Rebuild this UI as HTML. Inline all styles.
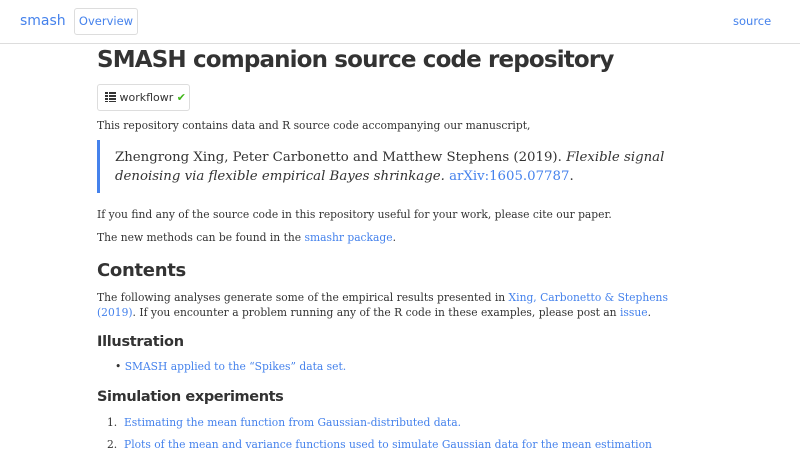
<!DOCTYPE html>
<html><head><meta charset="utf-8"><style>
*{margin:0;padding:0;box-sizing:border-box}
body{width:800px;height:450px;overflow:hidden;background:#fff;font-family:"DejaVu Serif","Liberation Serif",serif;color:#333;position:relative}
.a{position:absolute;white-space:nowrap}
a{color:#4582ec;text-decoration:none}
.nav{position:absolute;left:0;top:0;width:800px;height:44px;border-bottom:1px solid #ddd;font-family:"DejaVu Sans","Liberation Sans",sans-serif}
.h{font-family:"DejaVu Sans","Liberation Sans",sans-serif;font-weight:bold;color:#333}
.p{font-size:10.7px;line-height:15px}
.bq{font-size:13.3px}
</style></head><body>
<div class="nav">
<div class="a" style="left:20px;top:13px;font-size:14px;color:#4582ec">smash</div>
<div class="a" style="left:74px;top:8px;width:64px;height:27px;border:1px solid #ddd;border-radius:3px;font-size:11.5px;color:#4582ec;text-align:center;line-height:25px">Overview</div>
<div class="a" style="left:733px;top:14px;font-size:11.5px;color:#4582ec">source</div>
</div>
<div class="a h" style="left:97px;top:47px;font-size:23px;letter-spacing:-0.85px">SMASH companion source code repository</div>
<div class="a" style="left:97px;top:84px;width:93px;height:27px;border:1px solid #ddd;border-radius:3px;font-family:'DejaVu Sans',sans-serif;font-size:11px;line-height:25px;padding-left:7px;color:#333">
<svg width="11" height="10" viewBox="0 0 11 10" style="vertical-align:-1px"><g fill="#333"><rect x="0" y="0" width="3" height="2"/><rect x="4" y="0" width="7" height="2"/><rect x="0" y="3" width="3" height="2"/><rect x="4" y="3" width="7" height="2"/><rect x="0" y="6" width="3" height="2"/><rect x="4" y="6" width="7" height="2"/><rect x="0" y="9" width="3" height="1"/><rect x="4" y="9" width="7" height="1"/></g></svg> workflowr <span style="color:#3fb618;font-weight:bold">✔</span></div>
<div class="a p" style="left:97px;top:118px">This repository contains data and R source code accompanying our manuscript,</div>
<div class="a" style="left:97px;top:140px;width:3px;height:53px;background:#4582ec"></div>
<div class="a bq" style="left:115px;top:148px;line-height:19px">Zhengrong Xing, Peter Carbonetto and Matthew Stephens (2019). <i>Flexible signal</i><br><i>denoising via flexible empirical Bayes shrinkage.</i> <a>arXiv:1605.07787</a>.</div>
<div class="a p" style="left:97px;top:207px">If you find any of the source code in this repository useful for your work, please cite our paper.</div>
<div class="a p" style="left:97px;top:230px">The new methods can be found in the <a>smashr package</a>.</div>
<div class="a h" style="left:97px;top:260px;font-size:18px;letter-spacing:-0.3px">Contents</div>
<div class="a p" style="left:97px;top:290px">The following analyses generate some of the empirical results presented in <a>Xing, Carbonetto &amp; Stephens</a><br><a>(2019)</a>. If you encounter a problem running any of the R code in these examples, please post an <a>issue</a>.</div>
<div class="a h" style="left:97px;top:334px;font-size:14.5px;letter-spacing:-0.3px">Illustration</div>
<div class="a p" style="left:115px;top:359px">•&nbsp;<a>SMASH applied to the “Spikes” data set.</a></div>
<div class="a h" style="left:97px;top:389px;font-size:14.5px;letter-spacing:-0.4px">Simulation experiments</div>
<div class="a p" style="left:107px;top:415px">1.&nbsp; <a>Estimating the mean function from Gaussian-distributed data.</a></div>
<div class="a p" style="left:107px;top:437px">2.&nbsp; <a>Plots of the mean and variance functions used to simulate Gaussian data for the mean estimation</a></div>
</body></html>
